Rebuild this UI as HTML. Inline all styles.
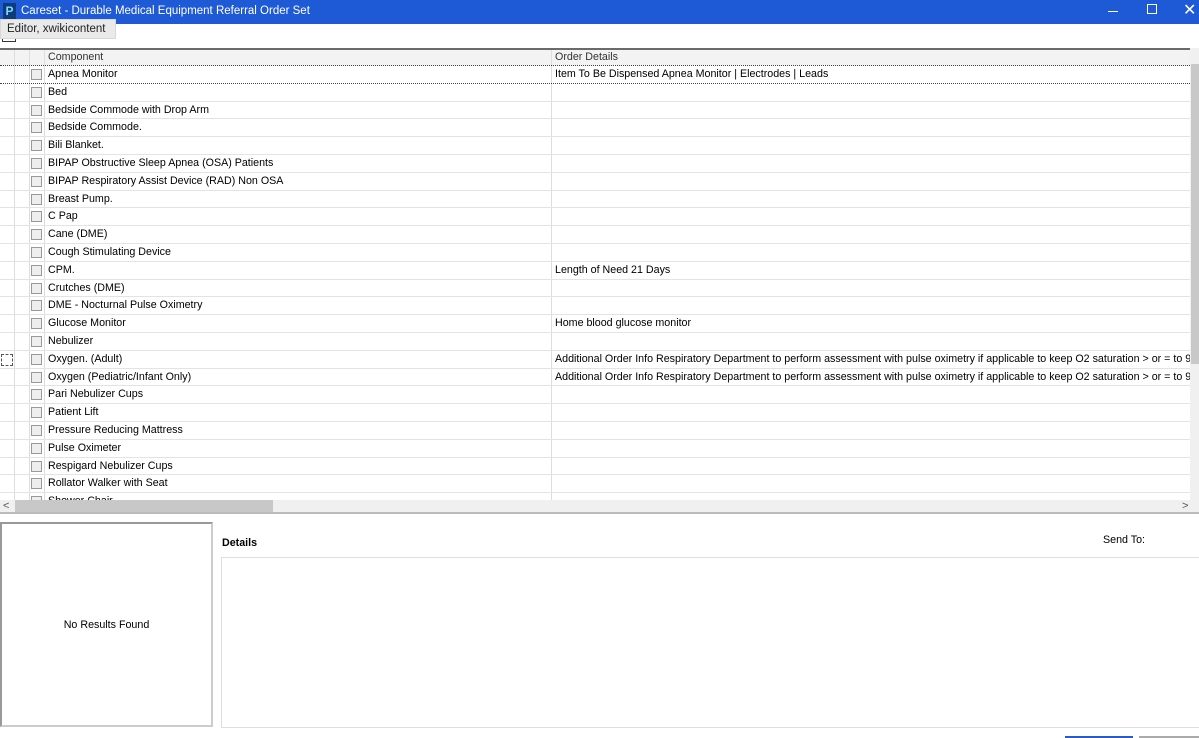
<!DOCTYPE html>
<html><head><style>
*{box-sizing:border-box;margin:0;padding:0}
body{width:1199px;height:738px;overflow:hidden;background:#fff;font-family:"Liberation Sans",sans-serif;font-size:10.7px;color:#000;position:relative}
.title{position:absolute;left:0;top:0;width:1199px;height:24px;background:#1f5ad6;color:#fff;font-size:11.5px}
.title .ic{position:absolute;left:3px;top:3px;width:13px;height:16px;background:#0e3c7a;color:#7fd7ff;font-weight:bold;font-size:12px;text-align:center;line-height:16px}
.title .t{position:absolute;left:21px;top:5px}
.tip{position:absolute;left:0;top:19px;width:116px;height:20px;background:#eaeaea;border:1px solid #d8d8d8;font-size:11.5px;padding:3px 6px;color:#222;white-space:nowrap;z-index:3}
.grid{position:absolute;left:0;top:48px;width:1190px;height:452px;overflow:hidden;border-top:2px solid #6a6a6a}
.hdr{height:16px;background:#f3f3f3;position:relative;border-bottom:1px dotted #444;color:#333}
.row{height:17.8px;position:relative;border-bottom:1px solid #e3e3e3}
.c{position:absolute;top:0;height:100%;line-height:17px;white-space:nowrap;overflow:hidden}
.v1{left:14px;border-left:1px solid #ddd}
.v2{left:29px;border-left:1px solid #ddd}
.cb{position:absolute;left:31px;top:3px;width:11px;height:11px;border:1px solid #999;background:#eee}
.comp{left:44px;padding-left:3px;width:507px;border-left:1px solid #ddd}
.od{left:551px;padding-left:3px;width:639px;border-left:1px solid #ddd}
.vs{position:absolute;left:1190px;top:48px;width:9px;height:452px;background:#f0f0f0}
.hs{position:absolute;left:0;top:500px;width:1199px;height:14px;background:#f0f0f0;border-bottom:2px solid #bbb}
</style></head><body>
<div class="title"><div class="ic">P</div><div class="t">Careset - Durable Medical Equipment Referral Order Set</div>
<div style="position:absolute;left:1108px;top:11px;width:10px;height:1px;background:#fff"></div>
<div style="position:absolute;left:1147px;top:4px;width:10px;height:10px;border:1px solid #fff"></div>
<div style="position:absolute;left:1183px;top:0px;font-size:16px">✕</div></div>
<div class="tip">Editor, xwikicontent</div>
<div style="position:absolute;left:2px;top:36px;width:14px;height:6px;border:1px solid #333;border-top:none"></div>
<div class="grid">
<div class="hdr"><div class="c v1"></div><div class="c v2"></div><div class="c comp" style="line-height:15px">Component</div><div class="c od" style="line-height:15px">Order Details</div></div>
<div class="row" style="border-bottom:1px dotted #444"><div class="c v1"></div><div class="c v2"></div><div class="cb"></div><div class="c comp">Apnea Monitor</div><div class="c od">Item To Be Dispensed Apnea Monitor | Electrodes | Leads</div></div>
<div class="row"><div class="c v1"></div><div class="c v2"></div><div class="cb"></div><div class="c comp">Bed</div><div class="c od"></div></div>
<div class="row"><div class="c v1"></div><div class="c v2"></div><div class="cb"></div><div class="c comp">Bedside Commode with Drop Arm</div><div class="c od"></div></div>
<div class="row"><div class="c v1"></div><div class="c v2"></div><div class="cb"></div><div class="c comp">Bedside Commode.</div><div class="c od"></div></div>
<div class="row"><div class="c v1"></div><div class="c v2"></div><div class="cb"></div><div class="c comp">Bili Blanket.</div><div class="c od"></div></div>
<div class="row"><div class="c v1"></div><div class="c v2"></div><div class="cb"></div><div class="c comp">BIPAP Obstructive Sleep Apnea (OSA) Patients</div><div class="c od"></div></div>
<div class="row"><div class="c v1"></div><div class="c v2"></div><div class="cb"></div><div class="c comp">BIPAP Respiratory Assist Device (RAD) Non OSA</div><div class="c od"></div></div>
<div class="row"><div class="c v1"></div><div class="c v2"></div><div class="cb"></div><div class="c comp">Breast Pump.</div><div class="c od"></div></div>
<div class="row"><div class="c v1"></div><div class="c v2"></div><div class="cb"></div><div class="c comp">C Pap</div><div class="c od"></div></div>
<div class="row"><div class="c v1"></div><div class="c v2"></div><div class="cb"></div><div class="c comp">Cane (DME)</div><div class="c od"></div></div>
<div class="row"><div class="c v1"></div><div class="c v2"></div><div class="cb"></div><div class="c comp">Cough Stimulating Device</div><div class="c od"></div></div>
<div class="row"><div class="c v1"></div><div class="c v2"></div><div class="cb"></div><div class="c comp">CPM.</div><div class="c od">Length of Need 21 Days</div></div>
<div class="row"><div class="c v1"></div><div class="c v2"></div><div class="cb"></div><div class="c comp">Crutches (DME)</div><div class="c od"></div></div>
<div class="row"><div class="c v1"></div><div class="c v2"></div><div class="cb"></div><div class="c comp">DME - Nocturnal Pulse Oximetry</div><div class="c od"></div></div>
<div class="row"><div class="c v1"></div><div class="c v2"></div><div class="cb"></div><div class="c comp">Glucose Monitor</div><div class="c od">Home blood glucose monitor</div></div>
<div class="row"><div class="c v1"></div><div class="c v2"></div><div class="cb"></div><div class="c comp">Nebulizer</div><div class="c od"></div></div>
<div class="row"><div style="position:absolute;left:1px;top:3px;width:12px;height:12px;border:1px dashed #555"></div><div class="c v1"></div><div class="c v2"></div><div class="cb"></div><div class="c comp">Oxygen. (Adult)</div><div class="c od">Additional Order Info Respiratory Department to perform assessment with pulse oximetry if applicable to keep O2 saturation &gt; or = to 90</div></div>
<div class="row"><div class="c v1"></div><div class="c v2"></div><div class="cb"></div><div class="c comp">Oxygen (Pediatric/Infant Only)</div><div class="c od">Additional Order Info Respiratory Department to perform assessment with pulse oximetry if applicable to keep O2 saturation &gt; or = to 90</div></div>
<div class="row"><div class="c v1"></div><div class="c v2"></div><div class="cb"></div><div class="c comp">Pari Nebulizer Cups</div><div class="c od"></div></div>
<div class="row"><div class="c v1"></div><div class="c v2"></div><div class="cb"></div><div class="c comp">Patient Lift</div><div class="c od"></div></div>
<div class="row"><div class="c v1"></div><div class="c v2"></div><div class="cb"></div><div class="c comp">Pressure Reducing Mattress</div><div class="c od"></div></div>
<div class="row"><div class="c v1"></div><div class="c v2"></div><div class="cb"></div><div class="c comp">Pulse Oximeter</div><div class="c od"></div></div>
<div class="row"><div class="c v1"></div><div class="c v2"></div><div class="cb"></div><div class="c comp">Respigard Nebulizer Cups</div><div class="c od"></div></div>
<div class="row"><div class="c v1"></div><div class="c v2"></div><div class="cb"></div><div class="c comp">Rollator Walker with Seat</div><div class="c od"></div></div>
<div class="row"><div class="c v1"></div><div class="c v2"></div><div class="cb"></div><div class="c comp">Shower Chair</div><div class="c od"></div></div>
</div>
<div class="vs"><div style="position:absolute;left:1px;top:16px;width:8px;height:300px;background:#c8c8c8"></div></div>
<div class="hs"><div style="position:absolute;left:3px;top:0;font-size:11px;color:#555">&lt;</div><div style="position:absolute;left:15px;top:0;width:258px;height:12px;background:#c8c8c8"></div><div style="position:absolute;left:1182px;top:0;font-size:11px;color:#555">&gt;</div></div>
<div style="position:absolute;left:0;top:522px;width:213px;height:205px;border:2px solid #999;border-right-color:#ccc;border-bottom-color:#ccc"></div>
<div style="position:absolute;left:0;top:619px;width:213px;text-align:center">No Results Found</div>
<div style="position:absolute;left:222px;top:537px;font-weight:bold">Details</div>
<div style="position:absolute;left:1103px;top:534px">Send To:</div>
<div style="position:absolute;left:221px;top:557px;width:978px;height:171px;border:1px solid #ddd;border-right:none"></div>
<div style="position:absolute;left:1065px;top:736px;width:68px;height:2px;background:#2a5bc4"></div>
<div style="position:absolute;left:1139px;top:736px;width:60px;height:2px;background:#aaa"></div>
</body></html>
